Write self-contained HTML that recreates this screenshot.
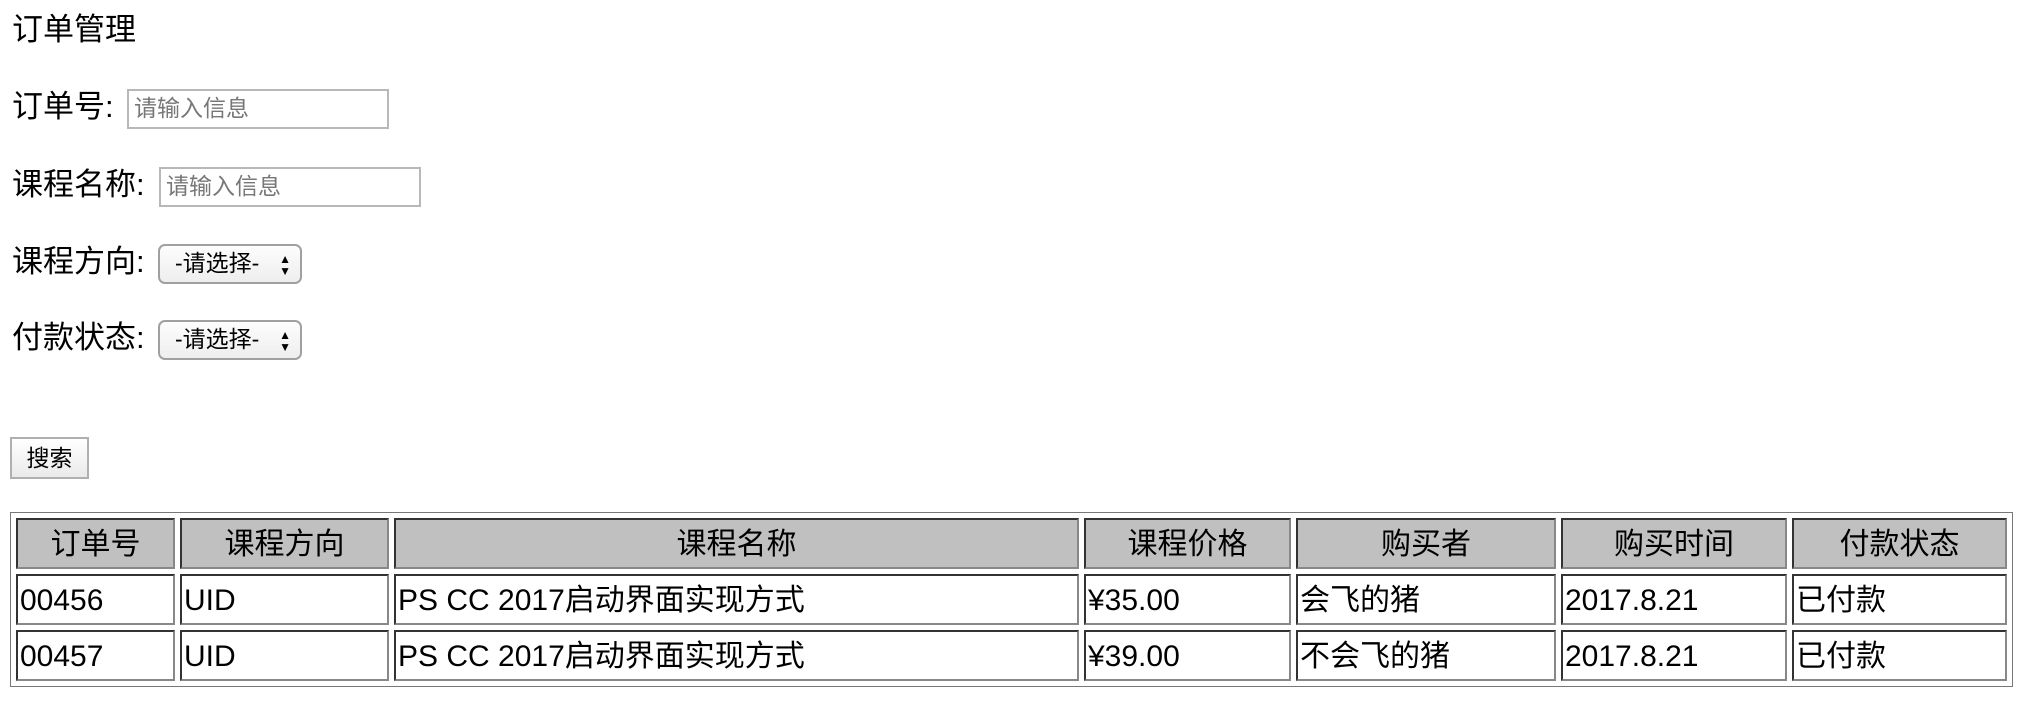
<!DOCTYPE html>
<html><head><meta charset="utf-8"><style>
html,body{margin:0;padding:0;background:#fff;width:2032px;height:704px;overflow:hidden}
body{font-family:"Liberation Sans","Noto Sans CJK SC",sans-serif;color:#000;position:relative}
.a{position:absolute;white-space:nowrap}
.lbl{font-size:31px;line-height:40px}
.inp{position:absolute;border:2px solid #b8b8b8;box-sizing:border-box;background:#fff;font-size:23px;color:#777;line-height:35px;padding-left:5px}
.sel{position:absolute;border:2px solid #a0a0a0;border-radius:7px;box-sizing:border-box;background:linear-gradient(#fdfdfd,#eee);font-size:23px;line-height:35px;padding-left:15px}
.sel .ar{position:absolute;right:9px;top:7px;font-size:12px;line-height:12px}
.btn{position:absolute;left:10px;top:437px;width:79px;height:42px;box-sizing:border-box;border:2px solid #b0b0b0;background:linear-gradient(#fff,#eaeaea);font-size:23px;text-align:center;line-height:38px}
table{position:absolute;left:10px;top:512px;border:1px solid #777;border-spacing:5px;border-collapse:separate;table-layout:fixed;font-size:30px}
td,th{border:2px solid;border-color:#333 #888 #888 #333;padding:3px 2px 0 2px;box-sizing:border-box;white-space:nowrap;overflow:hidden;line-height:44px;vertical-align:top}
th{background:#c0c0c0;font-weight:normal;text-align:center;height:51px}
td{height:51px;text-align:left}
</style></head><body>
<div class="a" style="left:12px;top:10px;font-size:31px;line-height:40px">订单管理</div>
<div class="a lbl" style="left:12px;top:87px">订单号:</div>
<div class="inp" style="left:127px;top:89px;width:262px;height:40px">请输入信息</div>
<div class="a lbl" style="left:12px;top:165px">课程名称:</div>
<div class="inp" style="left:159px;top:167px;width:262px;height:40px">请输入信息</div>
<div class="a lbl" style="left:12px;top:242px">课程方向:</div>
<div class="sel" style="left:158px;top:244px;width:144px;height:40px">-请选择-<span class="ar">▲<br>▼</span></div>
<div class="a lbl" style="left:12px;top:318px">付款状态:</div>
<div class="sel" style="left:158px;top:320px;width:144px;height:40px">-请选择-<span class="ar">▲<br>▼</span></div>
<div class="btn">搜索</div>
<table>
<colgroup><col style="width:159px"><col style="width:209px"><col style="width:685px"><col style="width:207px"><col style="width:260px"><col style="width:226px"><col style="width:215px"></colgroup>
<tr><th>订单号</th><th>课程方向</th><th>课程名称</th><th>课程价格</th><th>购买者</th><th>购买时间</th><th>付款状态</th></tr>
<tr><td>00456</td><td>UID</td><td>PS CC 2017启动界面实现方式</td><td>¥35.00</td><td>会飞的猪</td><td>2017.8.21</td><td>已付款</td></tr>
<tr><td>00457</td><td>UID</td><td>PS CC 2017启动界面实现方式</td><td>¥39.00</td><td>不会飞的猪</td><td>2017.8.21</td><td>已付款</td></tr>
</table>
</body></html>
